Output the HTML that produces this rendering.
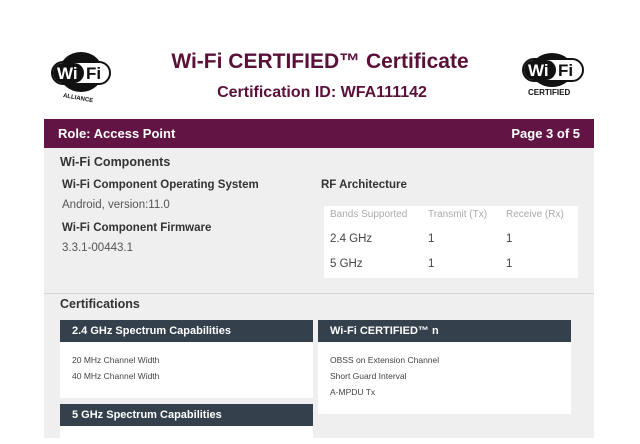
<!DOCTYPE html>
<html><head><meta charset="utf-8"><style>
*{margin:0;padding:0;box-sizing:border-box}
body{width:640px;height:438px;background:#fff;font-family:"Liberation Sans",Arial,sans-serif;position:relative;overflow:hidden}
.a{position:absolute}
.t{color:#5a1038;font-weight:bold}
.dk{background:#34404c;color:#fff;font-weight:bold;font-size:11px;padding-left:12px;line-height:22px}
.wh{background:#fff}
.sm{font-size:8.5px;color:#444}
</style></head><body>
<svg class="a" style="left:50px;top:48px" width="66" height="58" viewBox="0 0 66 58">
<ellipse cx="31" cy="24" rx="22" ry="20" fill="#111"/>
<rect x="2" y="14" width="58" height="22" rx="11" fill="#fff" stroke="#111" stroke-width="2"/>
<rect x="3" y="15" width="31" height="20" rx="10" fill="#111"/>
<text x="7" y="31" font-family="Liberation Sans" font-weight="bold" font-size="17" fill="#fff">Wi</text>
<text x="36" y="31" font-family="Liberation Sans" font-weight="bold" font-size="17" fill="#111">Fi</text>
<text x="13" y="52" font-family="Liberation Sans" font-weight="bold" font-size="6" fill="#111" transform="rotate(10 30 50)">ALLIANCE</text>
</svg>
<div class="a t" style="left:0;width:640px;text-align:center;top:50px;font-size:21px">Wi-Fi CERTIFIED™ Certificate</div>
<div class="a t" style="left:0;width:640px;text-align:center;top:84px;font-size:16px;padding-left:4px">Certification ID: WFA111142</div>
<svg class="a" style="left:520px;top:52px" width="70" height="46" viewBox="0 0 70 46">
<ellipse cx="32" cy="18" rx="21" ry="17" fill="#111"/>
<rect x="3" y="7" width="60" height="22" rx="11" fill="#fff" stroke="#111" stroke-width="2"/>
<rect x="4" y="8" width="32" height="20" rx="10" fill="#111"/>
<text x="8" y="24" font-family="Liberation Sans" font-weight="bold" font-size="17" fill="#fff">Wi</text>
<text x="38" y="24" font-family="Liberation Sans" font-weight="bold" font-size="17" fill="#111">Fi</text>
<text x="8" y="43" font-family="Liberation Sans" font-weight="bold" font-size="8" fill="#111">CERTIFIED</text>
</svg>
<div class="a" style="left:44px;top:119px;width:550px;height:319px;background:#efefef"></div>
<div class="a" style="left:44px;top:119px;width:550px;height:29px;background:#621444;color:#fff;font-weight:bold;font-size:13px;line-height:29px;padding:0 14px">Role: Access Point<span style="float:right">Page 3 of 5</span></div>
<div class="a" style="left:60px;top:155px;font-size:12.5px;font-weight:bold;color:#333">Wi-Fi Components</div>
<div class="a" style="left:62px;top:179px;font-size:11.5px;font-weight:bold;color:#333">Wi-Fi Component Operating System</div>
<div class="a" style="left:62px;top:199px;font-size:11.5px;color:#555">Android, version:11.0</div>
<div class="a" style="left:62px;top:222px;font-size:11.5px;font-weight:bold;color:#333">Wi-Fi Component Firmware</div>
<div class="a" style="left:62px;top:242px;font-size:11.5px;color:#555">3.3.1-00443.1</div>
<div class="a" style="left:321px;top:179px;font-size:11.5px;font-weight:bold;color:#333">RF Architecture</div>
<div class="a wh" style="left:324px;top:206px;width:254px;height:72px"></div>
<div class="a" style="left:330px;top:209px;font-size:10px;color:#aaa">Bands Supported</div>
<div class="a" style="left:428px;top:209px;font-size:10px;color:#aaa">Transmit (Tx)</div>
<div class="a" style="left:506px;top:209px;font-size:10px;color:#aaa">Receive (Rx)</div>
<div class="a" style="left:330px;top:233px;font-size:11.5px;color:#444">2.4 GHz</div>
<div class="a" style="left:428px;top:233px;font-size:11.5px;color:#444">1</div>
<div class="a" style="left:506px;top:233px;font-size:11.5px;color:#444">1</div>
<div class="a" style="left:330px;top:258px;font-size:11.5px;color:#444">5 GHz</div>
<div class="a" style="left:428px;top:258px;font-size:11.5px;color:#444">1</div>
<div class="a" style="left:506px;top:258px;font-size:11.5px;color:#444">1</div>
<div class="a" style="left:44px;top:293px;width:550px;height:1px;background:#d6d6d6"></div>
<div class="a" style="left:60px;top:297px;font-size:12.5px;font-weight:bold;color:#333">Certifications</div>
<div class="a wh" style="left:60px;top:320px;width:253px;height:78px"></div>
<div class="a dk" style="left:60px;top:320px;width:253px">2.4 GHz Spectrum Capabilities</div>
<div class="a sm" style="left:72px;top:355px">20 MHz Channel Width</div>
<div class="a sm" style="left:72px;top:371px">40 MHz Channel Width</div>
<div class="a wh" style="left:60px;top:404px;width:253px;height:40px"></div>
<div class="a dk" style="left:60px;top:404px;width:253px">5 GHz Spectrum Capabilities</div>
<div class="a wh" style="left:318px;top:320px;width:253px;height:94px"></div>
<div class="a dk" style="left:318px;top:320px;width:253px">Wi-Fi CERTIFIED™ n</div>
<div class="a sm" style="left:330px;top:355px">OBSS on Extension Channel</div>
<div class="a sm" style="left:330px;top:371px">Short Guard Interval</div>
<div class="a sm" style="left:330px;top:387px">A-MPDU Tx</div>
</body></html>
